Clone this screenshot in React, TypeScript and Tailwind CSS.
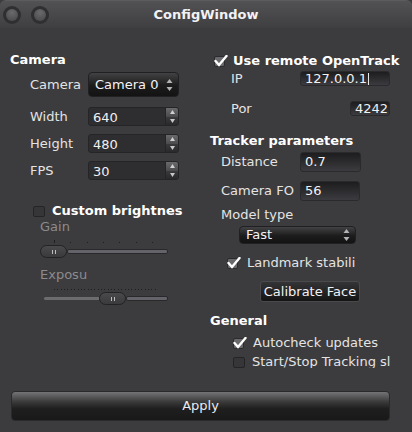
import React from 'react';

function Arrows() {
  return (
    <svg width="7" height="14" viewBox="0 0 7 14" className="shrink-0">
      <path d="M3.5 1 L6.5 5 L0.5 5 Z" fill="#b4b4b8" />
      <path d="M0.5 9 L6.5 9 L3.5 13 Z" fill="#b4b4b8" />
    </svg>
  );
}

function Combo({ text, className }: { text: string; className: string }) {
  return (
    <div
      className={`flex items-center justify-between rounded-[4px] border border-[#202022] bg-[linear-gradient(to_bottom,#424244,#1c1c1d_55%,#131314)] pl-[6px] pr-[5px] text-[13px] text-[#f4f4f8] ${className}`}
    >
      <span>{text}</span>
      <Arrows />
    </div>
  );
}

function Spin({ value }: { value: string }) {
  return (
    <div className="flex h-[19px] w-[91px] overflow-hidden rounded-[3px] border border-[#252427] bg-[#2e2d30]">
      <div className="flex flex-1 items-center pl-[4px] pt-[2px] text-[13px] text-[#f0f0f0]">{value}</div>
      <div className="flex w-[13px] flex-col border-l border-[#252427]">
        <div className="flex flex-1 items-center justify-center bg-[linear-gradient(to_bottom,#6a6a6c,#4a4a4c)]">
          <svg width="5" height="4" viewBox="0 0 5 4"><path d="M2.5 0 L5 4 L0 4 Z" fill="#d0d0d4" /></svg>
        </div>
        <div className="flex flex-1 items-center justify-center bg-[linear-gradient(to_bottom,#3a3a3c,#29292b)]">
          <svg width="5" height="4" viewBox="0 0 5 4"><path d="M0 0 L5 0 L2.5 4 Z" fill="#c8c8cc" /></svg>
        </div>
      </div>
    </div>
  );
}

function Field({ value, className, cursor }: { value: string; className: string; cursor?: boolean }) {
  return (
    <div
      className={`flex items-center rounded-[3px] border border-[#2a292c] bg-[linear-gradient(to_bottom,#1d1c1f,#2c2b2e_50%,#3c3b3f)] pl-[4px] text-[13px] text-[#f2f2f2] ${className}`}
    >
      <span>{value}</span>
      {cursor && <span className="ml-[1px] h-[12px] w-px bg-[#e8e8e8]" />}
    </div>
  );
}

function Check({ checked }: { checked: boolean }) {
  if (checked) {
    return (
      <svg width="14" height="12" viewBox="0 0 14 12" className="shrink-0">
        <rect x="0.5" y="1.5" width="10" height="10" rx="1.5" fill="#69686c" stroke="#2b2a2d" />
        <path d="M1.5 6 L5 10 L12.5 1" fill="none" stroke="#ffffff" strokeWidth="2.4" strokeLinecap="round" />
      </svg>
    );
  }
  return <div className="h-[11px] w-[12px] shrink-0 rounded-[2px] border border-[#242326] bg-[#363538]" />;
}

function Handle() {
  return (
    <div className="flex h-[13px] w-[27px] shrink-0 items-center justify-center gap-[2px] rounded-full border border-[#232225] bg-[linear-gradient(to_bottom,#4a494c,#3a393c)]">
      <div className="h-[4px] w-px bg-[#bdbdbd]" />
      <div className="h-[4px] w-px bg-[#bdbdbd]" />
    </div>
  );
}

function Groove() {
  return <div className="h-[5px] flex-1 rounded-[2px] border border-[#29282b] bg-[#64636a]" />;
}

export default function App() {
  const fineTicks = Array.from({ length: 31 });
  const gainTicks = Array.from({ length: 7 });

  return (
    <div className="flex h-[432px] w-[412px] flex-col overflow-hidden bg-[#3c3b3d] font-['DejaVu_Sans',sans-serif] text-[13px] leading-[16px] text-[#e4e4e4]">
      {/* Title bar */}
      <div className="grid h-[28px] shrink-0 grid-cols-[60px_1fr_60px] items-center rounded-t-[6px] border-t border-[#5c5b5e] bg-[linear-gradient(to_bottom,#525154,#3f3e41)]">
        <div className="flex items-center gap-[10px] pl-[3px]">
          <div className="flex h-[18px] w-[18px] items-center justify-center rounded-full bg-[#2f2e31]">
            <div className="h-[12px] w-[12px] rounded-full bg-[radial-gradient(circle_at_50%_30%,#6a6a6c,#454447)]" />
          </div>
          <div className="flex h-[18px] w-[18px] items-center justify-center rounded-full bg-[#2f2e31]">
            <div className="h-[12px] w-[12px] rounded-full bg-[radial-gradient(circle_at_50%_30%,#6a6a6c,#454447)]" />
          </div>
        </div>
        <div className="text-center font-bold text-[#f2f2f4]">ConfigWindow</div>
        <div />
      </div>

      {/* Body */}
      <div className="flex flex-1">
        {/* Left column */}
        <div className="flex w-[206px] flex-col">
          <div className="mt-[24px] h-[16px] pl-[10px] font-bold text-white">Camera</div>

          <div className="mt-[4px] flex h-[25px] items-center pl-[30px]">
            <span className="w-[58px]">Camera</span>
            <Combo text="Camera 0" className="h-[25px] w-[91px]" />
          </div>

          <div className="mt-[10px] flex h-[19px] items-center pl-[30px]">
            <span className="w-[58px]">Width</span>
            <Spin value="640" />
          </div>
          <div className="mt-[8px] flex h-[19px] items-center pl-[30px]">
            <span className="w-[58px]">Height</span>
            <Spin value="480" />
          </div>
          <div className="mt-[8px] flex h-[19px] items-center pl-[30px]">
            <span className="w-[58px]">FPS</span>
            <Spin value="30" />
          </div>

          <div className="mt-[23px] flex h-[16px] items-center gap-[7px] pl-[33px]">
            <Check checked={false} />
            <span className="font-bold text-white">Custom brightnes</span>
          </div>

          <div className="h-[16px] pl-[40px] text-[#8c8b8f]">Gain</div>
          <div className="mt-[5px] ml-[54px] flex h-[3px] w-[99px] items-end justify-between">
            {gainTicks.map((_, i) => (
              <div key={i} className={i === 0 ? 'h-[3px] w-px bg-[#1e1e20]' : 'h-px w-px bg-[#1e1e20]'} />
            ))}
          </div>
          <div className="mt-[2px] ml-[40px] flex h-[13px] w-[128px] items-center">
            <Handle />
            <Groove />
          </div>

          <div className="mt-[9px] h-[16px] pl-[40px] text-[#8c8b8f]">Exposu</div>
          <div className="mt-[6px] ml-[54px] flex h-px w-[102px] justify-between">
            {fineTicks.map((_, i) => (
              <div key={i} className="h-px w-px bg-[#1e1e20]" />
            ))}
          </div>
          <div className="mt-[2px] ml-[44px] flex h-[13px] w-[124px] items-center">
            <div className="h-[3px] w-[55px] rounded-l-[2px] bg-[#6c6c6e]" />
            <Handle />
            <Groove />
          </div>
        </div>

        {/* Right column */}
        <div className="flex flex-1 flex-col">
          <div className="mt-[25px] flex h-[16px] items-center gap-[5px] pl-[8px]">
            <Check checked />
            <span className="font-bold text-white">Use remote OpenTrack</span>
          </div>

          <div className="mt-[2px] flex h-[15px] items-center pl-[25px]">
            <span className="w-[69px]">IP</span>
            <Field value="127.0.0.1" cursor className="h-[15px] w-[90px]" />
          </div>
          <div className="mt-[15px] flex h-[15px] items-center pl-[25px]">
            <span className="w-[69px]">Por</span>
            <div className="flex w-[90px] justify-end">
              <Field value="4242" className="h-[15px] w-[40px]" />
            </div>
          </div>

          <div className="mt-[17px] h-[16px] pl-[4px] font-bold text-white">Tracker parameters</div>

          <div className="mt-[3px] flex h-[20px] items-center pl-[15px]">
            <span className="w-[79px]">Distance</span>
            <Field value="0.7" className="h-[20px] w-[61px]" />
          </div>
          <div className="mt-[9px] flex h-[20px] items-center pl-[15px]">
            <span className="w-[79px] whitespace-nowrap">Camera FO</span>
            <Field value="56" className="h-[20px] w-[60px]" />
          </div>

          <div className="mt-[6px] h-[16px] pl-[15px]">Model type</div>
          <div className="mt-[3px] pl-[33px]">
            <Combo text="Fast" className="h-[18px] w-[117px]" />
          </div>

          <div className="mt-[11px] flex h-[16px] items-center gap-[6px] pl-[21px]">
            <Check checked />
            <span>Landmark stabili</span>
          </div>

          <div className="mt-[10px] pl-[54px]">
            <div className="flex h-[21px] w-[100px] items-center justify-center rounded-[3px] border border-[#4a494c] bg-[linear-gradient(to_bottom,#343436,#141415)] text-[#f2f2f4]">
              Calibrate Face
            </div>
          </div>

          <div className="mt-[11px] h-[16px] pl-[4px] font-bold text-white">General</div>

          <div className="mt-[6px] flex h-[16px] items-center gap-[6px] pl-[27px]">
            <Check checked />
            <span>Autocheck updates</span>
          </div>
          <div className="mt-[3px] flex h-[14px] w-[184px] items-start gap-[7px] overflow-hidden pl-[27px]">
            <div className="mt-[3px]">
              <Check checked={false} />
            </div>
            <span className="whitespace-nowrap">Start/Stop Tracking sl</span>
          </div>
        </div>
      </div>

      {/* Apply */}
      <div className="shrink-0 px-[11px] pb-[11px]">
        <div className="flex h-[30px] w-[379px] items-center justify-center rounded-[4px] border border-[#2a2a2c] bg-[linear-gradient(to_bottom,#747476,#3a3a3b_35%,#1e1e1f_60%,#19191a)] text-[#eaeaf2]">
          Apply
        </div>
      </div>
    </div>
  );
}
